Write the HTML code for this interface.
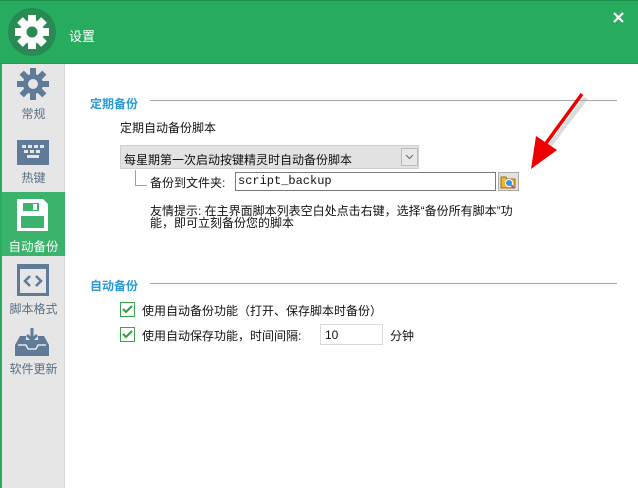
<!DOCTYPE html>
<html><head><meta charset="utf-8"><style>
*{margin:0;padding:0;box-sizing:border-box}
body{width:638px;height:488px;overflow:hidden;background:#fff;font-family:"Liberation Sans","Noto Sans CJK SC",sans-serif;font-size:12px;color:#111;position:relative}
.a{position:absolute}
.hdr{left:0;top:0;width:638px;height:64px;background:#27ab5f;border-top:1px solid #1f8f4c;border-bottom:1px solid #229a54}
.side{left:0;top:64px;width:65px;height:424px;background:#e6e6e6;border-left:2px solid #27ab5f;border-right:1px solid #d6d6d6}
.lbl{width:63px;text-align:center;color:#5a6f86;font-size:12px}
.sec{color:#2a9ad6;font-weight:bold;font-size:12px}
.line{height:1px;background:#a8a8a8}
.cb{width:15px;height:15px;border:1px solid #3aa34a;background:#fff}
</style></head><body>
<div class="a hdr"></div>
<svg class="a" style="left:8px;top:8px" width="48" height="48" viewBox="0 0 48 48"><circle cx="24" cy="24" r="24" fill="#2a8a55"/>
<g fill="#fff" transform="translate(24 24)"><circle r="12"/><g id="t"><rect x="-4" y="-17" width="8" height="8"/></g><use href="#t" transform="rotate(45)"/><use href="#t" transform="rotate(90)"/><use href="#t" transform="rotate(135)"/><use href="#t" transform="rotate(180)"/><use href="#t" transform="rotate(225)"/><use href="#t" transform="rotate(270)"/><use href="#t" transform="rotate(315)"/></g><circle cx="24" cy="24" r="5.5" fill="#2a8a55"/></svg>
<div class="a" style="left:69px;top:26px;color:#fff;font-size:13px">设置</div>
<svg class="a" style="left:613px;top:12px" width="11" height="11"><path d="M1 1L10 10M10 1L1 10" stroke="#fff" stroke-width="2.2"/></svg>
<div class="a side"></div>
<svg class="a" style="left:17px;top:68px" width="32" height="32" viewBox="-16 -16 32 32"><g fill="#5f7b97"><circle r="10"/><g id="u"><rect x="-3" y="-16" width="6" height="7"/></g><use href="#u" transform="rotate(45)"/><use href="#u" transform="rotate(90)"/><use href="#u" transform="rotate(135)"/><use href="#u" transform="rotate(180)"/><use href="#u" transform="rotate(225)"/><use href="#u" transform="rotate(270)"/><use href="#u" transform="rotate(315)"/></g><circle r="5" fill="#e6e6e6"/></svg>
<div class="a lbl" style="left:2px;top:105px">常规</div>
<svg class="a" style="left:17px;top:140px" width="32" height="25"><rect width="32" height="25" fill="#5f7b97"/><g fill="#e6e6e6"><rect x="5" y="5" width="4" height="3"/><rect x="11" y="5" width="4" height="3"/><rect x="17" y="5" width="4" height="3"/><rect x="23" y="5" width="4" height="3"/><rect x="7" y="10" width="4" height="3"/><rect x="13" y="10" width="4" height="3"/><rect x="19" y="10" width="4" height="3"/><rect x="10" y="15" width="12" height="3"/></g></svg>
<div class="a lbl" style="left:2px;top:169px">热键</div>
<div class="a" style="left:2px;top:192px;width:63px;height:64px;background:#3cb36c"></div>
<svg class="a" style="left:17px;top:199px" width="31" height="32"><path d="M0 0H26L31 5V32H0Z" fill="#fff"/><rect x="6" y="4" width="16" height="8" fill="#3cb36c"/><rect x="16" y="5" width="4" height="6" fill="#fff"/><rect x="4" y="17" width="23" height="12" fill="#3cb36c"/></svg>
<div class="a" style="left:57px;top:220px;width:0;height:0;border:8px solid transparent;border-right-color:#fff"></div>
<div class="a lbl" style="left:2px;top:236px;color:#fff;font-size:12.5px">自动备份</div>
<svg class="a" style="left:17px;top:264px" width="32" height="32"><rect width="32" height="32" fill="#5f7b97"/><rect x="3" y="5" width="26" height="24" fill="#e6e6e6"/><path d="M13 12L8 17L13 22M19 12L24 17L19 22" stroke="#5f7b97" stroke-width="2.5" fill="none"/></svg>
<div class="a lbl" style="left:2px;top:300px">脚本格式</div>
<svg class="a" style="left:15px;top:328px" width="34" height="28"><path d="M5 8H11V12H23V8H29L34 17V28H0V17Z" fill="#5f7b97"/><path d="M3 17H11L13 21H21L23 17H31" stroke="#e6e6e6" stroke-width="1.5" fill="none"/><path d="M17 0V12M12 7L17 12L22 7" stroke="#5f7b97" stroke-width="3" fill="none"/></svg>
<div class="a lbl" style="left:2px;top:360px">软件更新</div>

<div class="a sec" style="left:90px;top:95px">定期备份</div>
<div class="a line" style="left:150px;top:100px;width:467px"></div>
<div class="a" style="left:120px;top:119px">定期自动备份脚本</div>
<div class="a" style="left:120px;top:145px;width:299px;height:24px;background:#e2e2e2;border:1px solid #d0d0d0"></div>
<div class="a" style="left:124px;top:151px">每星期第一次启动按键精灵时自动备份脚本</div>
<svg class="a" style="left:401px;top:148px" width="17" height="18"><rect x=".5" y=".5" width="16" height="17" fill="#e8e8e8" stroke="#bbb"/><path d="M5 7L8.5 10.5L12 7" stroke="#666" fill="none"/></svg>
<div class="a" style="left:135px;top:170px;width:12px;height:16px;border-left:1px solid #a0a0a0;border-bottom:1px solid #a0a0a0"></div>
<div class="a" style="left:150px;top:174px">备份到文件夹:</div>
<div class="a" style="left:235px;top:172px;width:261px;height:19px;border:1px solid #7a7a7a;font-family:'Liberation Mono',monospace;font-size:12px;padding:1px 2px">script_backup</div>
<div class="a" style="left:498px;top:172px;width:21px;height:19px;border:1px solid #aaa;background:#e2e2e2"></div>
<svg class="a" style="left:500px;top:174px" width="17" height="15"><path d="M1 3H6L7 5H15V14H1Z" fill="#e8b830" stroke="#a07010"/><circle cx="9" cy="9" r="3.5" fill="#3a8ee0" stroke="#fff"/><path d="M11 11L14 14" stroke="#c030c0" stroke-width="1.5"/></svg>
<div class="a" style="left:150px;top:205px;line-height:12px;width:430px">友情提示: 在主界面脚本列表空白处点击右键，选择“备份所有脚本”功<br>能，即可立刻备份您的脚本</div>
<svg class="a" style="left:520px;top:90px" width="70" height="90"><path d="M64 5L26 55" stroke="#999" stroke-width="4" opacity=".35" transform="translate(2 3)"/><path d="M62 4L24 56" stroke="#e00" stroke-width="3.5"/><path d="M11 79L16 46L37 60Z" fill="#e00"/></svg>

<div class="a sec" style="left:90px;top:277px">自动备份</div>
<div class="a line" style="left:150px;top:283px;width:467px"></div>
<div class="a cb" style="left:120px;top:302px"></div>
<svg class="a" style="left:122px;top:305px" width="11" height="9"><path d="M1 4L4 7L10 1" stroke="#2f9a40" stroke-width="2" fill="none"/></svg>
<div class="a" style="left:142px;top:302px">使用自动备份功能（打开、保存脚本时备份）</div>
<div class="a cb" style="left:120px;top:327px"></div>
<svg class="a" style="left:122px;top:330px" width="11" height="9"><path d="M1 4L4 7L10 1" stroke="#2f9a40" stroke-width="2" fill="none"/></svg>
<div class="a" style="left:142px;top:327px">使用自动保存功能，时间间隔:</div>
<div class="a" style="left:320px;top:324px;width:63px;height:21px;border:1px solid #d8d8d8;padding:3px 4px">10</div>
<div class="a" style="left:390px;top:327px">分钟</div>
</body></html>
